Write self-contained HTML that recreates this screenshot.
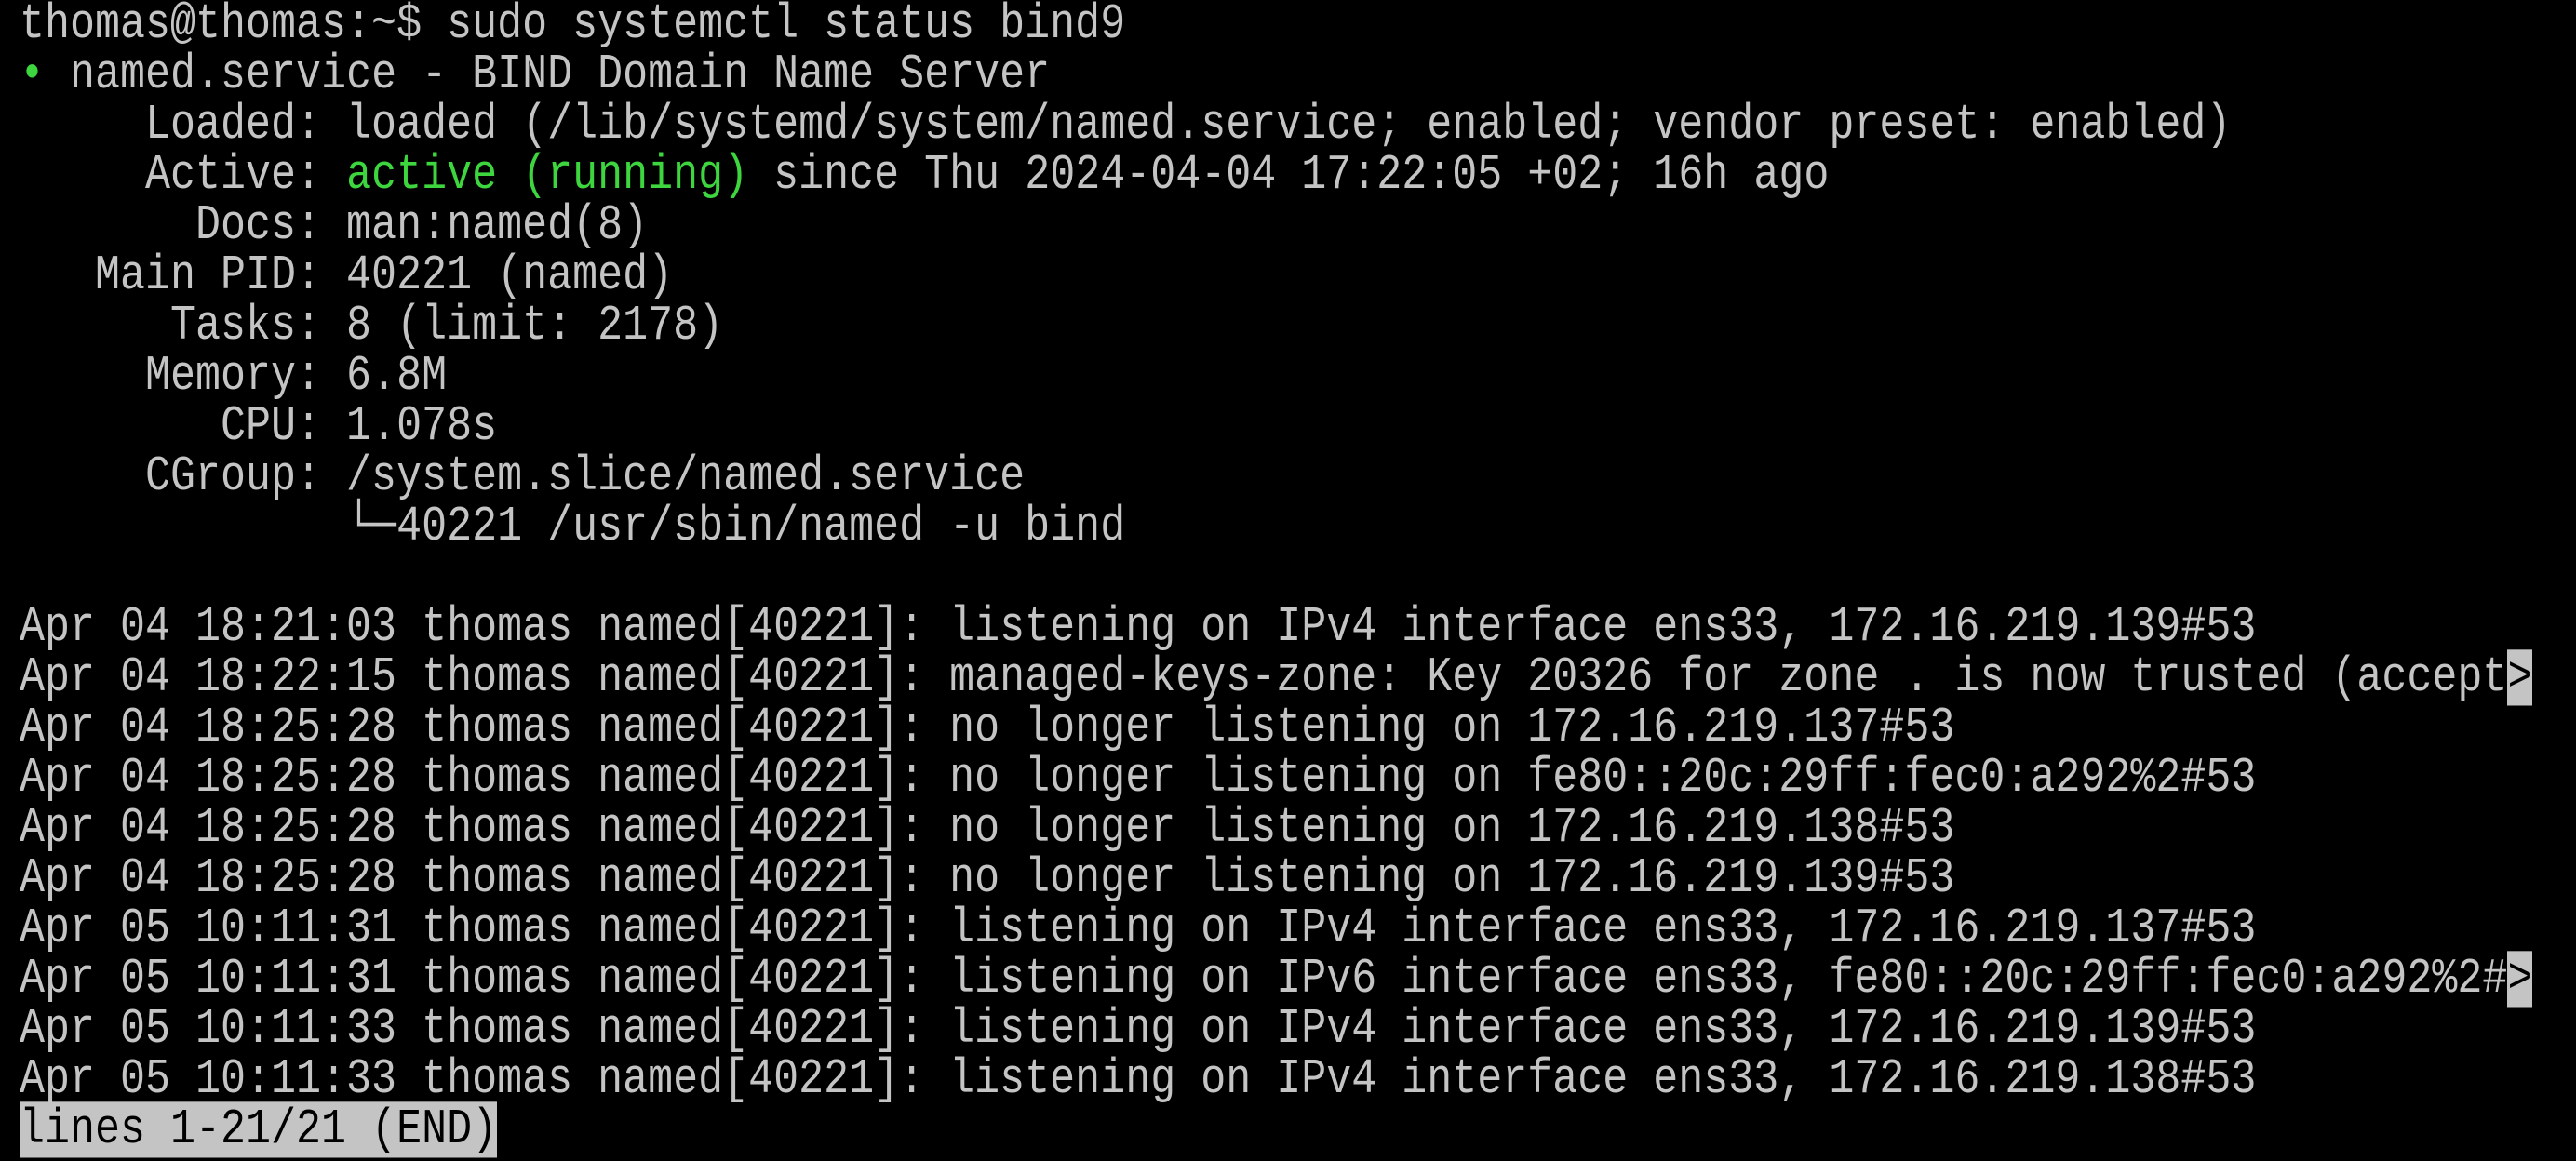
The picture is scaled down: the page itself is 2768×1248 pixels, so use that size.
<!DOCTYPE html>
<html><head><meta charset="utf-8">
<style>
html,body{margin:0;padding:0;background:#000;width:2768px;height:1248px;overflow:hidden}
.t{position:absolute;left:21px;top:0;font-family:"Liberation Mono","DejaVu Sans Mono",monospace;font-size:45px;line-height:54px;color:#c4c4c4}
.l{height:54px;white-space:pre;transform:scaleY(1.18);transform-origin:50% 50%}
.g{color:#3ed63e}
.r{background:#c4c4c4;color:#000}
</style></head><body>
<div class="t"><div class="l">thomas@thomas:~$ sudo systemctl status bind9</div><div class="l"><span class="g">•</span> named.service - BIND Domain Name Server</div><div class="l">     Loaded: loaded (/lib/systemd/system/named.service; enabled; vendor preset: enabled)</div><div class="l">     Active: <span class="g">active (running)</span> since Thu 2024-04-04 17:22:05 +02; 16h ago</div><div class="l">       Docs: man:named(8)</div><div class="l">   Main PID: 40221 (named)</div><div class="l">      Tasks: 8 (limit: 2178)</div><div class="l">     Memory: 6.8M</div><div class="l">        CPU: 1.078s</div><div class="l">     CGroup: /system.slice/named.service</div><div class="l">             └─40221 /usr/sbin/named -u bind</div><div class="l"> </div><div class="l">Apr 04 18:21:03 thomas named[40221]: listening on IPv4 interface ens33, 172.16.219.139#53</div><div class="l">Apr 04 18:22:15 thomas named[40221]: managed-keys-zone: Key 20326 for zone . is now trusted (accept<span class="r">&gt;</span></div><div class="l">Apr 04 18:25:28 thomas named[40221]: no longer listening on 172.16.219.137#53</div><div class="l">Apr 04 18:25:28 thomas named[40221]: no longer listening on fe80::20c:29ff:fec0:a292%2#53</div><div class="l">Apr 04 18:25:28 thomas named[40221]: no longer listening on 172.16.219.138#53</div><div class="l">Apr 04 18:25:28 thomas named[40221]: no longer listening on 172.16.219.139#53</div><div class="l">Apr 05 10:11:31 thomas named[40221]: listening on IPv4 interface ens33, 172.16.219.137#53</div><div class="l">Apr 05 10:11:31 thomas named[40221]: listening on IPv6 interface ens33, fe80::20c:29ff:fec0:a292%2#<span class="r">&gt;</span></div><div class="l">Apr 05 10:11:33 thomas named[40221]: listening on IPv4 interface ens33, 172.16.219.139#53</div><div class="l">Apr 05 10:11:33 thomas named[40221]: listening on IPv4 interface ens33, 172.16.219.138#53</div><div class="l"><span class="r">lines 1-21/21 (END)</span></div></div>
</body></html>
